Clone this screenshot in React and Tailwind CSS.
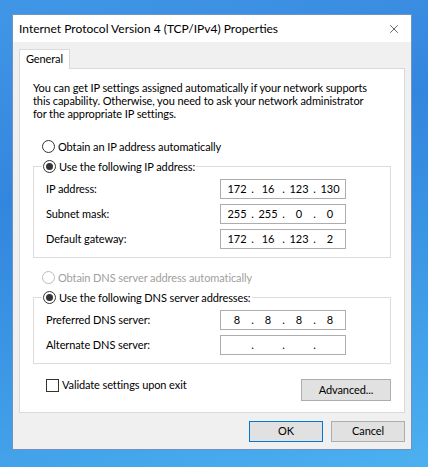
import { X } from "lucide-react";

const font = { fontFamily: 'Lato, "Noto Sans", "Liberation Sans", sans-serif' };

function Radio({ checked, disabled, label }) {
  return (
    <div className="flex h-[13px] items-center gap-[3px] whitespace-nowrap leading-[13px]">
      <span
        className={`flex h-[13px] w-[13px] items-center justify-center rounded-full border bg-white ${
          disabled ? "border-[#bcbcbc]" : "border-[#333333]"
        }`}
      >
        {checked && <span className="h-[7px] w-[7px] rounded-full bg-[#333333]" />}
      </span>
      <span className={disabled ? "text-[#a0a0a0]" : "text-black"}>{label}</span>
    </div>
  );
}

function IpField({ parts }) {
  return (
    <div className="flex h-[20px] w-[126px] items-center border border-[#adadad] bg-white pl-[4px]">
      {parts.map((p, i) => (
        <div key={i} className="flex items-center">
          {i > 0 && <span className="w-[7px] text-center">.</span>}
          <span className="w-[24px] text-center">{p}</span>
        </div>
      ))}
    </div>
  );
}

function Row({ label, parts }) {
  return (
    <div className="flex h-[20px] items-center">
      <span className="w-[186px] pl-[12px]">{label}</span>
      <IpField parts={parts} />
    </div>
  );
}

function Group({ legend, children }) {
  return (
    <fieldset className="border border-[#dcdcdc]">
      <legend className="ml-[8px] bg-white px-[1px]">
        <Radio checked label={legend} />
      </legend>
      <div className="flex flex-col gap-[5px] pb-[8px] pt-[6px]">{children}</div>
    </fieldset>
  );
}

function Button({ children, primary, className }) {
  return (
    <button
      className={`flex items-center justify-center border bg-[#e1e1e1] text-black ${
        primary ? "border-[#0078d7]" : "border-[#adadad]"
      } ${className}`}
    >
      {children}
    </button>
  );
}

export default function App() {
  return (
    <div
      className="h-[467px] w-[428px] overflow-hidden bg-[linear-gradient(165deg,#4296e6_0%,#3386dd_35%,#3a95e4_60%,#4cb0f0_100%)] pl-[12px] pt-[14px] text-[11px] tracking-[-0.1px] text-black"
      style={font}
    >
      <div className="flex h-[436px] w-[400px] flex-col border border-[#6f93c0] bg-[#f0f0f0]">
        {/* Title bar */}
        <div className="flex h-[27px] items-center justify-between bg-white pl-[6px] pr-[10px]">
          <span className="whitespace-nowrap text-[12px] leading-none tracking-normal">
            Internet Protocol Version 4 (TCP/IPv4) Properties
          </span>
          <X size={14} strokeWidth={1.2} className="text-[#222]" />
        </div>

        <div className="flex flex-1 flex-col px-[6px] pt-[7px]">
          {/* Tab */}
          <div className="flex">
            <div className="relative z-10 -mb-px flex h-[20px] w-[51px] items-center justify-center border border-b-0 border-[#d9d9d9] bg-white">
              General
            </div>
          </div>

          {/* Panel */}
          <div className="flex h-[345px] flex-col border border-[#d9d9d9] bg-white px-[13px]">
            <div className="mt-[12px] flex flex-col whitespace-nowrap leading-[13px]">
              <span className="h-[13px]">
                You can get IP settings assigned automatically if your network supports
              </span>
              <span className="h-[13px]">
                this capability. Otherwise, you need to ask your network administrator
              </span>
              <span className="h-[13px]">for the appropriate IP settings.</span>
            </div>

            <div className="ml-[9px] mt-[20px]">
              <Radio label="Obtain an IP address automatically" />
            </div>

            <div className="mt-[7px]">
              <Group legend="Use the following IP address:">
                <Row label="IP address:" parts={["172", "16", "123", "130"]} />
                <Row label="Subnet mask:" parts={["255", "255", "0", "0"]} />
                <Row label="Default gateway:" parts={["172", "16", "123", "2"]} />
              </Group>
            </div>

            <div className="ml-[9px] mt-[13px]">
              <Radio disabled label="Obtain DNS server address automatically" />
            </div>

            <div className="mt-[7px]">
              <Group legend="Use the following DNS server addresses:">
                <Row label="Preferred DNS server:" parts={["8", "8", "8", "8"]} />
                <Row label="Alternate DNS server:" parts={["", "", "", ""]} />
              </Group>
            </div>

            <div className="mt-[15px] flex items-start justify-between pl-[13px]">
              <div className="flex h-[13px] items-center gap-[3px]">
                <span className="h-[13px] w-[13px] border border-[#333333] bg-white" />
                <span>Validate settings upon exit</span>
              </div>
              <Button className="h-[22px] w-[90px]">Advanced...</Button>
            </div>
          </div>

          {/* Footer */}
          <div className="mt-[8px] flex justify-end gap-[8px]">
            <Button primary className="h-[21px] w-[74px]">OK</Button>
            <Button className="h-[21px] w-[74px]">Cancel</Button>
          </div>
        </div>
      </div>
    </div>
  );
}
